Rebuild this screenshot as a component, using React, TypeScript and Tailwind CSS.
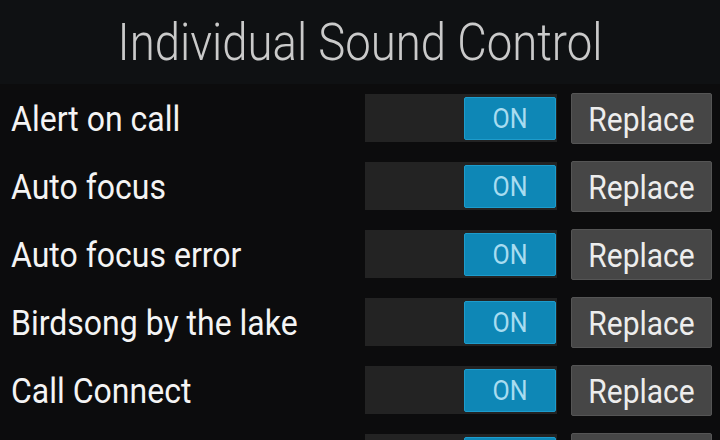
const sounds = [
  "Alert on call",
  "Auto focus",
  "Auto focus error",
  "Birdsong by the lake",
  "Call Connect",
  "Camera click",
];

function Toggle() {
  return (
    <div className="flex h-[48px] w-[192px] items-center justify-end bg-[#232323] pr-[1px]">
      <div className="flex h-[43px] w-[92px] items-center justify-center rounded-[2px] border border-[#1d9ccc] bg-[#0e87b6] text-[25px] leading-none text-[#a8dcf0]">
        <span className="scale-y-[1.12]">ON</span>
      </div>
    </div>
  );
}

export default function App() {
  return (
    <div
      className="h-[440px] w-[720px] overflow-hidden bg-[#0c0c0d]"
      style={{ fontFamily: "Roboto, 'Noto Sans', sans-serif" }}
    >
      <div className="flex h-[84px] items-center justify-center bg-[#0f1113] pt-[2px]">
        <h1 className="scale-y-[1.12] text-[45.5px] font-light leading-none text-[#cacaca]">
          Individual Sound Control
        </h1>
      </div>
      {sounds.map((name) => (
        <div key={name} className="flex h-[68px] items-center pl-[11px] pr-[8px]">
          <span className="flex-1 pt-[4px]">
            <span className="inline-block scale-y-[1.08] text-[32px] leading-none text-[#f4f4f4]">
              {name}
            </span>
          </span>
          <Toggle />
          <button className="ml-[14px] flex h-[51px] w-[141px] items-center justify-center rounded-[2px] border border-[#555] bg-[#464646] pt-[3px] text-[30px] leading-none text-[#ededed]">
            <span className="scale-y-[1.1]">Replace</span>
          </button>
        </div>
      ))}
    </div>
  );
}
